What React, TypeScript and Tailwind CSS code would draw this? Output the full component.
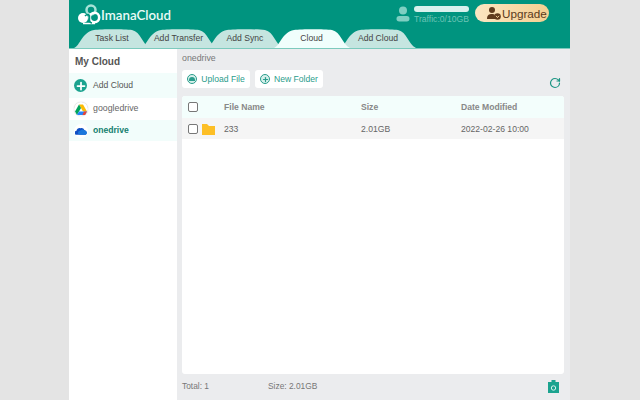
import { Plus, RotateCw } from "lucide-react";

const font = "font-['Liberation_Sans',Arial,sans-serif]";

const tabs = ["Task List", "Add Transfer", "Add Sync", "Cloud", "Add Cloud"];

const Tab = ({ label }: { label: string }) => {
  const active = label === "Cloud";
  return (
    <div className={`relative -mr-[9.5px] flex h-[19px] w-[76px] shrink-0 items-center justify-center ${active ? "z-10" : ""}`}>
      <svg className="absolute inset-0 h-full w-full" viewBox="0 0 76 19" preserveAspectRatio="none">
        <path
          d="M0 19C6 17 8 3 20 1C28 0 50 0 58 1C67 3 68 15 76 19Z"
          fill={active ? "#f0fefc" : "#c5e5e0"}
        />
      </svg>
      <span className="relative text-[8.6px] text-[#444]">{label}</span>
    </div>
  );
};

const Logo = () => (
  <svg width="24" height="21" viewBox="0 0 24 21" fill="none">
    <circle cx="14" cy="6" r="4.5" stroke="#a5e3d8" strokeWidth="2.5" />
    <circle cx="6" cy="14" r="5" fill="#fff" />
    <circle cx="17.5" cy="13.5" r="4.7" stroke="#fff" strokeWidth="2.6" />
    <path d="M6 19.5H18" stroke="#fff" strokeWidth="1.5" />
    <path d="M8 12C11 9 13 11 12.5 14C12 17 13 19 15 19" stroke="#00947f" strokeWidth="1.6" />
  </svg>
);

const Checkbox = () => <span className="block h-[10px] w-[10px] rounded-[2px] border border-[#777] bg-white" />;

const Toolbutton = ({ label, upload }: { label: string; upload?: boolean }) => (
  <div className="flex h-[18px] w-[68px] items-center justify-center gap-[4px] rounded-[3px] bg-white text-[8.6px] text-[#2a9d8c]">
    <span className="flex h-[10px] w-[10px] items-center justify-center rounded-full border border-[#2a9d8c] bg-[#d6f0eb]">
      {upload ? (
        <span className="h-[4px] w-[6px] rounded-t-full bg-[#2a9d8c]" />
      ) : (
        <Plus size={7} strokeWidth={4} />
      )}
    </span>
    {label}
  </div>
);

const GoogleDrive = () => (
  <svg width="12" height="11" viewBox="0 0 24 22">
    <path d="M8 1h8l8 14h-8z" fill="#fbbc04" />
    <path d="M8 1L0 15l4 7 8-14z" fill="#00a35c" />
    <path d="M8 15h16l-4 7H4z" fill="#2684fc" />
    <path d="M20 22l4-7h-6l-3 7z" fill="#ea4335" />
  </svg>
);

const OneDrive = () => (
  <svg width="13" height="9" viewBox="0 0 26 17">
    <path d="M4 17a4 4 0 0 1-1-8 6 6 0 0 1 8-5 7 7 0 0 1 8 4 5 5 0 0 1 2 9z" fill="#0f4fc4" />
    <path d="M10 17a4 4 0 0 1 0-8 6 6 0 0 1 9-1 5 5 0 0 1 3 9z" fill="#1a78dc" />
  </svg>
);

const App = () => {
  return (
    <div className={`flex h-[400px] w-[640px] overflow-hidden bg-[#e4e4e4] pl-[69px] ${font}`}>
      <div className="flex w-[501px] flex-col bg-[#ebecee]">
        <div className="flex h-[49px] shrink-0 flex-col border-b border-[#7ccabd] bg-[#00947f]">
          <div className="flex h-[29px] items-start justify-between pl-[8px] pr-[21px]">
            <div className="mt-[3px] flex items-center">
              <Logo />
              <span className="mt-[3px] font-['Lato',sans-serif] text-[13.3px] font-semibold text-[#eafaf7]">ImanaCloud</span>
            </div>
            <div className="mt-[4px] flex items-start gap-[6px]">
              <div className="flex items-start gap-[4px]">
                <svg className="mt-[2px]" width="14" height="16" viewBox="0 0 14 16" fill="#7fcfc2">
                  <circle cx="7" cy="4.5" r="4" />
                  <rect x="0.5" y="10" width="13" height="5.5" rx="2.7" />
                </svg>
                <div className="mt-[2px] flex flex-col gap-[2px]">
                  <div className="h-[6px] w-[55px] rounded-full bg-[#d8f1ed]" />
                  <span className="text-[8.6px] leading-[10px] text-[#6cc4b6]">Traffic:0/10GB</span>
                </div>
              </div>
              <div className="flex h-[18px] w-[74px] items-center gap-[1px] rounded-full bg-gradient-to-r from-[#fbe6c2] to-[#f4cf90] pl-[12px] text-[11.7px] text-[#5a3a1c]">
                <svg width="14" height="14" viewBox="0 0 14 14" fill="#5f3b1d">
                  <circle cx="5" cy="4" r="3" />
                  <path d="M0 13c0-4 2-5 5-5s3 1 3 5z" />
                  <circle cx="10.5" cy="10.5" r="3.3" />
                  <path d="M9 9.8l1.5 1.800 1.500-1.800" stroke="#f4d29a" strokeWidth="1" fill="none" />
                </svg>
                <span className="pt-[1px]">Upgrade</span>
              </div>
            </div>
          </div>
          <div className="flex h-[19px] pl-[5px]">
            {tabs.map((t) => (
              <Tab key={t} label={t} />
            ))}
          </div>
        </div>

        <div className="flex min-h-0 flex-1">
          <div className="w-[108px] shrink-0 bg-white">
            <div className="flex h-[24px] items-center pl-[6px] text-[10px] font-bold text-[#555]">My Cloud</div>
            <div className="flex h-[25px] items-center gap-[6px] bg-[#f2fdfb] pl-[5px] text-[8.6px] text-[#555]">
              <span className="flex h-[13px] w-[13px] items-center justify-center rounded-full bg-[#1ba38f] text-white">
                <Plus size={12} strokeWidth={3.5} />
              </span>
              Add Cloud
            </div>
            <div className="flex h-[22px] items-center gap-[5px] pl-[5px] text-[8.8px] text-[#666]">
              <span className="flex h-[14px] w-[14px] items-center justify-center rounded-full bg-white shadow-[0_0_1px_#aaa]">
                <GoogleDrive />
              </span>
              googledrive
            </div>
            <div className="flex h-[21px] items-center gap-[5px] bg-[#f2fdfb] pl-[5px] text-[8.6px] font-bold text-[#14806f]">
              <span className="flex h-[14px] w-[14px] items-center justify-center rounded-full bg-white">
                <OneDrive />
              </span>
              onedrive
            </div>
          </div>

          <div className="flex min-w-0 flex-1 flex-col pl-[5px] pr-[6px]">
            <div className="flex h-[20px] items-center text-[8.8px] text-[#777]">onedrive</div>
            <div className="mb-[7px] flex h-[20px] items-center gap-[5px]">
              <Toolbutton label="Upload File" upload />
              <Toolbutton label="New Folder" />
              <RotateCw size={12} strokeWidth={2.4} className="ml-auto mr-[3px] mt-[8px] text-[#1b9583]" />
            </div>
            <div className="h-[278px] rounded-[3px] bg-white text-[8.6px] text-[#666]">
              <div className="flex h-[22px] items-center rounded-t-[3px] bg-[#f3fefc] font-bold text-[#888]">
                <span className="ml-[6px] w-[36px]"><Checkbox /></span>
                <span className="w-[137px]">File Name</span>
                <span className="w-[100px]">Size</span>
                <span>Date Modified</span>
              </div>
              <div className="flex h-[21px] items-center bg-[#f5f5f5] pt-[1px]">
                <span className="ml-[6px] w-[14px]"><Checkbox /></span>
                <svg className="w-[22px]" width="13" height="11" viewBox="0 0 13 11" preserveAspectRatio="xMinYMid meet">
                  <path d="M0 0h5l2 2h6v9H0z" fill="#fdbf26" />
                </svg>
                <span className="w-[137px]">233</span>
                <span className="w-[100px]">2.01GB</span>
                <span>2022-02-26 10:00</span>
              </div>
            </div>
            <div className="flex flex-1 items-center pb-[1px] text-[8.4px] text-[#777]">
              <span className="w-[86px]">Total: 1</span>
              <span>Size: 2.01GB</span>
              <svg className="ml-auto mr-[5px]" width="11" height="13" viewBox="0 0 11 13">
                <path d="M0 2h3.500V0h4v2H11v11H0z" fill="#1ba38f" />
                <circle cx="5.5" cy="8" r="2.2" fill="none" stroke="#d9f3ef" strokeWidth="1" />
              </svg>
            </div>
          </div>
        </div>
      </div>
    </div>
  );
};

export default App;
